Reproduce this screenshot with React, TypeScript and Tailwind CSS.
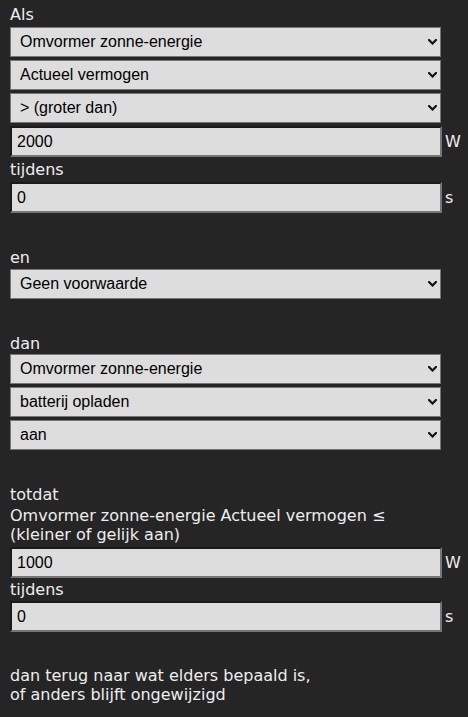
const labelFont = { fontFamily: '"DejaVu Sans", Verdana, sans-serif' };

function Chevron() {
  return (
    <svg
      className="pointer-events-none absolute right-[4px] top-[12px]"
      width="9"
      height="6"
      viewBox="0 0 9 6"
      fill="none"
    >
      <path d="M1 1 L4.5 4.5 L8 1" stroke="#111" strokeWidth="2.2" strokeLinecap="square" />
    </svg>
  );
}

function Select({ value, className = '' }: { value: string; className?: string }) {
  return (
    <div className={`relative w-[431px] ${className}`}>
      <select
        defaultValue={value}
        className="block h-[30px] w-full appearance-none border border-[#767676] bg-[#dddddd] pl-[9px] text-[16px] leading-[28px] text-black outline-none font-['Liberation_Sans',Arial,sans-serif]"
      >
        <option value={value}>{value}</option>
      </select>
      <Chevron />
    </div>
  );
}

function NumberInput({ value, unit, className = '' }: { value: string; unit: string; className?: string }) {
  return (
    <div className={`flex items-center ${className}`}>
      <input
        defaultValue={value}
        className="block h-[31px] w-[432px] border-2 border-t-[#1a1a1a] border-l-[#1a1a1a] border-r-[#767676] border-b-[#767676] bg-[#dddddd] px-[5px] text-[16px] text-black outline-none font-['Liberation_Sans',Arial,sans-serif]"
      />
      <span className="ml-[3px] text-[16px] leading-[19px] text-[#eeeeee]" style={labelFont}>
        {unit}
      </span>
    </div>
  );
}

function Label({ children, className = '' }: { children: React.ReactNode; className?: string }) {
  return (
    <div className={`text-[16px] leading-[19px] text-[#eeeeee] ${className}`} style={labelFont}>
      {children}
    </div>
  );
}

export default function App() {
  return (
    <div className="min-h-[717px] w-[468px] bg-[#252525] pl-[10px] pt-[5px]">
      <Label>Als</Label>
      <Select value="Omvormer zonne-energie" className="mt-[3px]" />
      <Select value="Actueel vermogen" className="mt-[3px]" />
      <Select value="> (groter dan)" className="mt-[3px]" />
      <NumberInput value="2000" unit="W" className="mt-[3px]" />
      <Label className="mt-[3px]">tijdens</Label>
      <NumberInput value="0" unit="s" className="mt-[3px]" />

      <Label className="mt-[35px]">en</Label>
      <Select value="Geen voorwaarde" className="mt-[2px]" />

      <Label className="mt-[35px]">dan</Label>
      <Select value="Omvormer zonne-energie" className="mt-[1px]" />
      <Select value="batterij opladen" className="mt-[3px]" />
      <Select value="aan" className="mt-[3px]" />

      <Label className="mt-[35px]">totdat</Label>
      <Label className="mt-[2px]">
        Omvormer zonne-energie Actueel vermogen ≤
        <br />
        (kleiner of gelijk aan)
      </Label>
      <NumberInput value="1000" unit="W" className="mt-[3px]" />
      <Label className="mt-[2px]">tijdens</Label>
      <NumberInput value="0" unit="s" className="mt-[2px]" />

      <Label className="mt-[34px]">
        dan terug naar wat elders bepaald is,
        <br />
        of anders blijft ongewijzigd
      </Label>
    </div>
  );
}
